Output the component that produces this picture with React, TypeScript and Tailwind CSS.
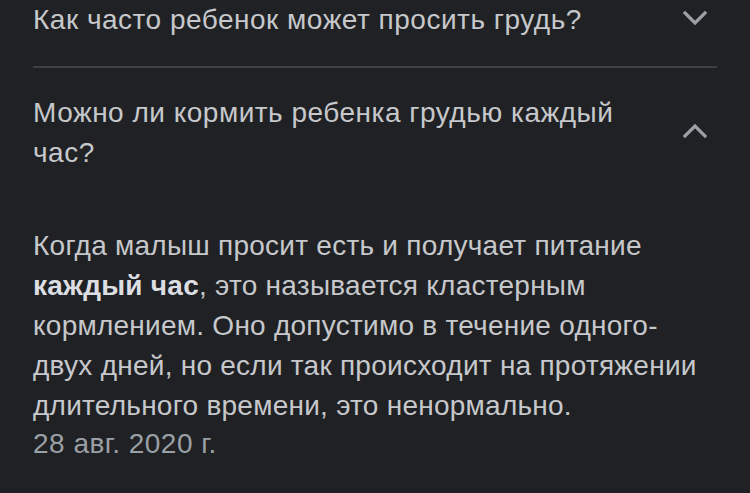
import React from "react";

function Chevron({ up }: { up?: boolean }) {
  return (
    <svg width="24" height="16" viewBox="0 0 24 16" className="shrink-0">
      <path
        d={up ? "M2 14 L12 4 L22 14" : "M2 3 L12 13 L22 3"}
        fill="none"
        stroke="#9aa0a6"
        strokeWidth="3.2"
        strokeLinecap="square"
      />
    </svg>
  );
}

export default function App() {
  return (
    <div
      className="w-[750px] h-[493px] overflow-hidden bg-[#202124] text-[#c6c8cb]"
      style={{ fontFamily: '"Liberation Sans", Arial, sans-serif' }}
    >
      <div className="px-[33px]">
        <div className="flex items-start justify-between pb-[26px] border-b-2 border-[#3c4043]">
          <div className="text-[28px] leading-[40px] tracking-[0.5px] whitespace-nowrap">
            Как часто ребенок может просить грудь?
          </div>
          <div className="h-[40px] flex items-center pr-[10px] -mt-[2px]">
            <Chevron />
          </div>
        </div>

        <div className="flex items-center justify-between pt-[25px]">
          <div className="text-[28px] leading-[40px] tracking-[0.5px] whitespace-nowrap">
            Можно ли кормить ребенка грудью каждый
            <br />
            час?
          </div>
          <div className="pr-[10px] -mt-[6px]">
            <Chevron up />
          </div>
        </div>

        <div className="mt-[53px] text-[28px] leading-[40px] tracking-[0.25px] whitespace-nowrap">
          Когда малыш просит есть и получает питание
          <br />
          <b className="font-bold text-[#dcdee1]">каждый час</b>, это называется кластерным
          <br />
          кормлением. Оно допустимо в течение одного-
          <br />
          двух дней, но если так происходит на протяжении
          <br />
          длительного времени, это ненормально.
        </div>
        <div className="text-[28px] leading-[36px] tracking-[0.5px] text-[#9aa0a6]">28 авг. 2020 г.</div>
      </div>
    </div>
  );
}
